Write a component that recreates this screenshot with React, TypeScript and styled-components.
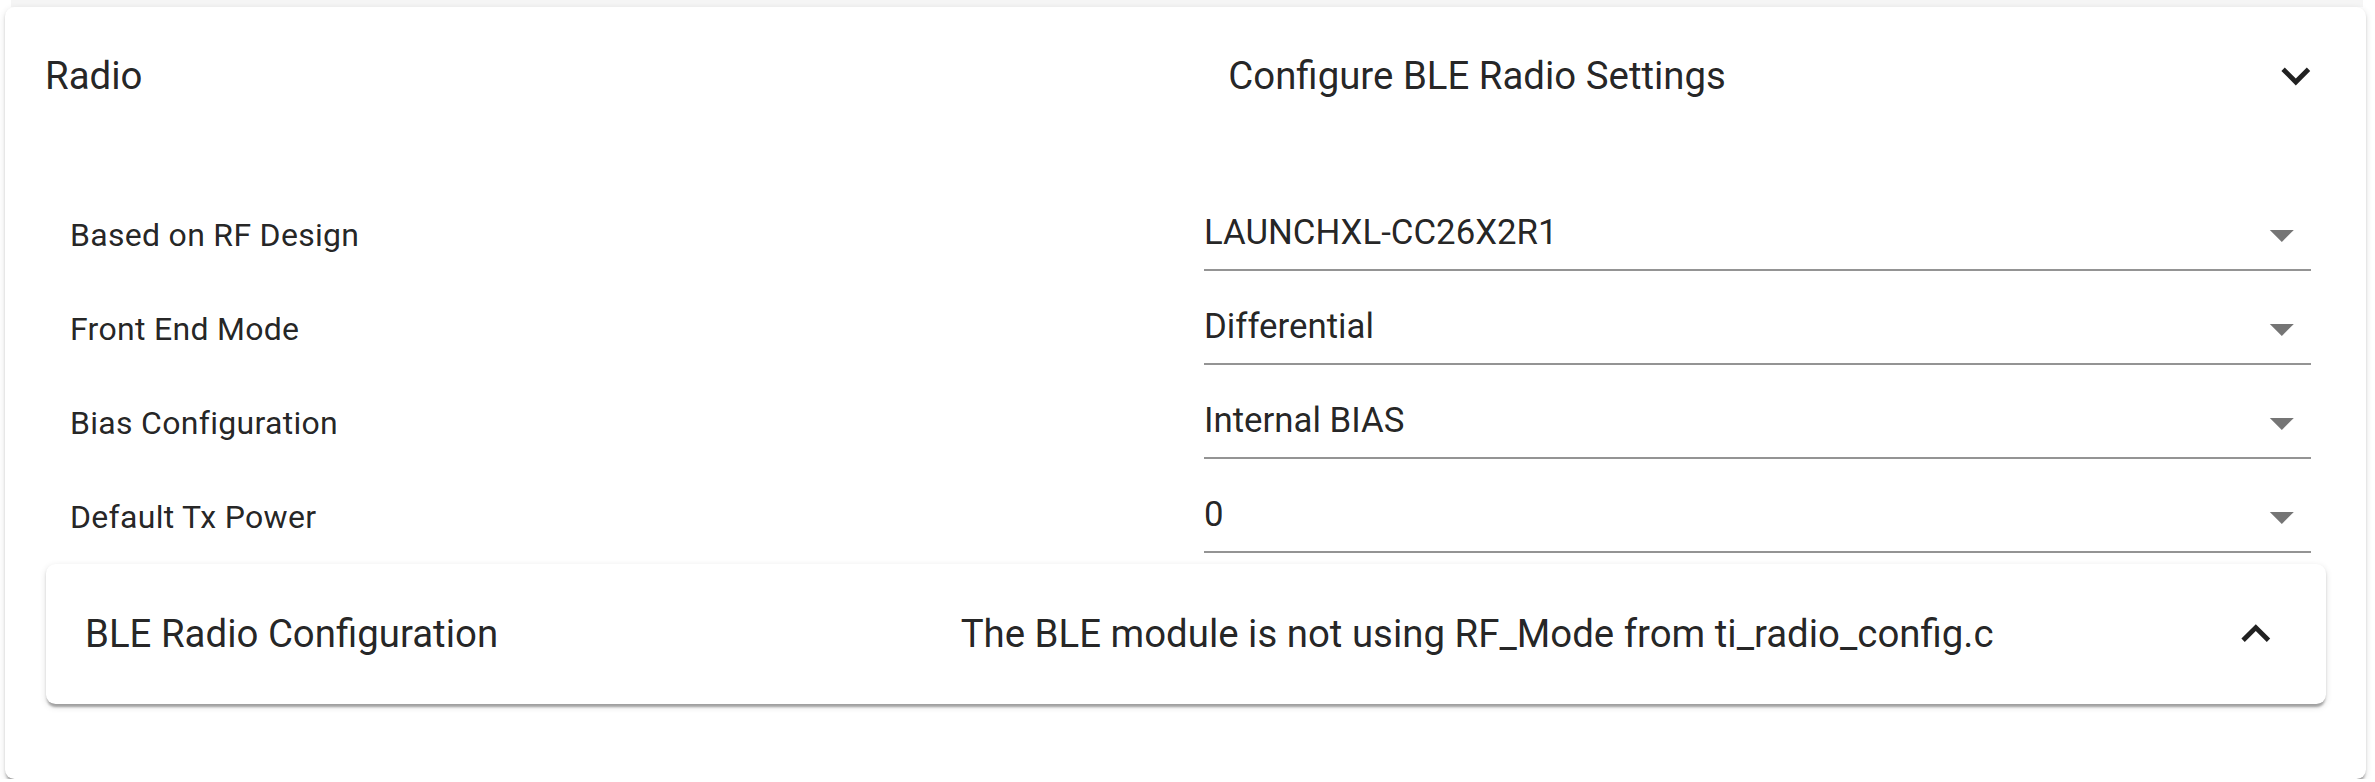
import React from "react";
import styled, { createGlobalStyle } from "styled-components";

const GlobalStyle = createGlobalStyle`
  body {
    margin: 0;
    background: #ffffff;
    font-family: Roboto, "Liberation Sans", sans-serif;
    color: rgba(0, 0, 0, 0.87);
  }
`;

const Page = styled.div`
  width: 2375px;
`;

const PrevEdge = styled.div`
  height: 7px;
  margin: 0 12px 0 11px;
  background: #f5f5f5;
`;

const Card = styled.div`
  margin-left: 5px;
  width: 2361px;
  background: #fff;
  border-radius: 9.6px;
  box-shadow: 0 4.8px 2.4px -2.4px rgba(0, 0, 0, 0.2),
    0 2.4px 2.4px 0 rgba(0, 0, 0, 0.14), 0 2.4px 7.2px 0 rgba(0, 0, 0, 0.12);
`;

const Summary = styled.div<{ $height: number; $padLeft: number }>`
  display: grid;
  grid-template-columns: 642px 1fr 57.6px;
  align-items: center;
  height: ${(p) => p.$height}px;
  padding: 0 41.2px 0 ${(p) => p.$padLeft}px;
  box-sizing: border-box;
`;

const Title = styled.div`
  font-size: 38.4px;
  line-height: 1.5;
`;

const Description = styled.div`
  font-size: 38.4px;
  line-height: 1.5;
  text-align: center;
  white-space: nowrap;
`;

const IconBox = styled.svg`
  width: 57.6px;
  height: 57.6px;
  display: block;
  fill: rgba(0, 0, 0, 0.87);
`;

const Details = styled.div`
  padding: 32px 40px 75px 41px;
`;

const Rows = styled.div`
  padding: 0 15px 0 24px;
`;

const Row = styled.div`
  display: grid;
  grid-template-columns: 1134px 1fr;
  height: 94px;
`;

const Label = styled.div`
  display: flex;
  align-items: center;
  padding-top: 22px;
  font-size: 32px;
  letter-spacing: 0.3px;
  line-height: 1.5;
`;

const Field = styled.div`
  display: flex;
  align-items: center;
  padding-top: 19px;
  border-bottom: 2px solid rgba(0, 0, 0, 0.42);
  box-sizing: border-box;
  height: 94px;
`;

const Value = styled.div`
  flex: 1;
  font-size: 34.8px;
  line-height: 1.2;
`;

const DropIcon = styled.svg`
  width: 57.6px;
  height: 57.6px;
  margin-top: 4.6px;
  fill: rgba(0, 0, 0, 0.54);
`;

const InnerCard = styled.div`
  margin-top: 11px;
  background: #fff;
  border-radius: 9.6px;
  box-shadow: 0 4.8px 2.4px -2.4px rgba(0, 0, 0, 0.2),
    0 2.4px 2.4px 0 rgba(0, 0, 0, 0.14), 0 2.4px 7.2px 0 rgba(0, 0, 0, 0.12);
`;

const ExpandMore = () => (
  <IconBox viewBox="0 0 24 24">
    <path d="M16.59 8.59 12 13.17 7.41 8.59 6 10l6 6 6-6z" />
  </IconBox>
);

const ExpandLess = () => (
  <IconBox viewBox="0 0 24 24">
    <path d="m12 8-6 6 1.41 1.41L12 10.83l4.59 4.58L18 14z" />
  </IconBox>
);

const settings = [
  { label: "Based on RF Design", value: "LAUNCHXL-CC26X2R1" },
  { label: "Front End Mode", value: "Differential" },
  { label: "Bias Configuration", value: "Internal BIAS" },
  { label: "Default Tx Power", value: "0" },
];

const App: React.FC = () => {
  return (
    <Page>
      <GlobalStyle />
      <PrevEdge />
      <Card>
        <Summary $height={138} $padLeft={40}>
          <Title>Radio</Title>
          <Description>Configure BLE Radio Settings</Description>
          <ExpandMore />
        </Summary>
        <Details>
          <Rows>
            {settings.map((s) => (
              <Row key={s.label}>
                <Label>{s.label}</Label>
                <Field>
                  <Value>{s.value}</Value>
                  <DropIcon viewBox="0 0 24 24">
                    <path d="M7 10l5 5 5-5z" />
                  </DropIcon>
                </Field>
              </Row>
            ))}
          </Rows>
          <InnerCard>
            <Summary $height={140} $padLeft={39}>
              <Title>BLE Radio Configuration</Title>
              <Description>
                The BLE module is not using RF_Mode from ti_radio_config.c
              </Description>
              <ExpandLess />
            </Summary>
          </InnerCard>
        </Details>
      </Card>
    </Page>
  );
};

export default App;
